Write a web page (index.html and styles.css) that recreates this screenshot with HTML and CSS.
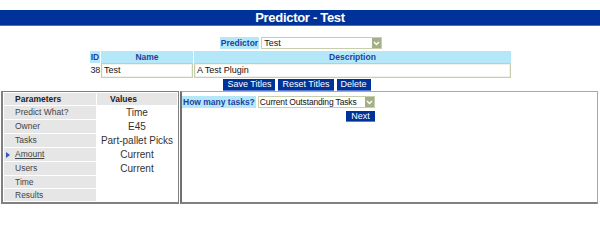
FILE: index.html
```html
<!DOCTYPE html>
<html>
<head>
<meta charset="utf-8">
<link rel="stylesheet" href="styles.css">
</head>
<body>
<div class="title">Predictor - Test</div>

<div class="pred-row">
  <span class="lbl">Predictor</span>
  <div class="select sel-pred"><span class="sel-val">Test</span><span class="sel-arrow"><svg width="7" height="5" viewBox="0 0 7 5"><path d="M1 1 L3.5 3.5 L6 1" fill="none" stroke="#fff" stroke-width="1.4"/></svg></span></div>
</div>

<div class="plugins">
  <div class="th">ID</div>
  <div class="th">Name</div>
  <div class="th">Description</div>
  <div class="td-id">38</div>
  <div class="box">Test</div>
  <div class="box">A Test Plugin</div>
</div>

<div class="buttons">
  <span class="btn">Save Titles</span>
  <span class="btn">Reset Titles</span>
  <span class="btn">Delete</span>
</div>

<div class="lower">
  <div class="params">
    <table class="ptable">
      <tr><th class="ph"><span class="mark"></span>Parameters</th><th class="ph vh">Values</th></tr>
      <tr class="r"><td class="p"><span class="mark"></span>Predict What?</td><td class="v">Time</td></tr>
      <tr class="r"><td class="p"><span class="mark"></span>Owner</td><td class="v">E45</td></tr>
      <tr class="r"><td class="p"><span class="mark"></span>Tasks</td><td class="v">Part-pallet Picks</td></tr>
      <tr class="r"><td class="p"><span class="mark"><span class="tri"></span></span><span class="cur">Amount</span></td><td class="v">Current</td></tr>
      <tr class="r"><td class="p"><span class="mark"></span>Users</td><td class="v">Current</td></tr>
      <tr class="s"><td class="p"><span class="mark"></span>Time</td><td class="v"></td></tr>
      <tr class="s"><td class="p"><span class="mark"></span>Results</td><td class="v"></td></tr>
    </table>
  </div>
  <div class="work">
    <div class="form">
      <span class="lbl lbl-q">How many tasks?</span>
      <div class="select sel-tasks"><span class="sel-val">Current Outstanding Tasks</span><span class="sel-arrow"><svg width="7" height="5" viewBox="0 0 7 5"><path d="M1 1 L3.5 3.5 L6 1" fill="none" stroke="#fff" stroke-width="1.4"/></svg></span></div>
      <span></span>
      <span class="btn btn-next">Next</span>
    </div>
  </div>
</div>
</body>
</html>
```

FILE: styles.css
```css
html, body {
  margin: 0;
  padding: 0;
  background: #fff;
}
body {
  padding-top: 10px;
  font-family: "Liberation Sans", Arial, sans-serif;
  font-size: 9px;
  color: #222;
}
.title {
  height: 16px;
  line-height: 16px;
  background: #003399;
  border-bottom: 1px solid #4a6fc0;
  color: #fff;
  font-weight: bold;
  font-size: 13px;
  letter-spacing: -0.3px;
  text-align: center;
  box-sizing: border-box;
}
.pred-row {
  margin-top: 11px;
  display: flex;
  justify-content: center;
  align-items: flex-start;
  gap: 2px;
  height: 13px;
  margin-bottom: 1px;
  padding-left: 2px;
}
.lbl {
  background: #b4e8f8;
  color: #1f3f9f;
  font-weight: bold;
  font-size: 8.5px;
  height: 12px;
  line-height: 12px;
  padding: 0 1px;
  white-space: nowrap;
}
.select {
  display: flex;
  align-items: center;
  box-sizing: border-box;
  height: 12px;
  border: 1px solid #c6ceae;
  background: #fff;
}
.sel-pred { width: 121px; }
.sel-tasks { width: 117px; }
.sel-val {
  flex: 1;
  padding-left: 2px;
  font-size: 9px;
  line-height: 10px;
  color: #111;
  white-space: nowrap;
  overflow: hidden;
}
.sel-tasks .sel-val {
  font-size: 8.5px;
  letter-spacing: -0.15px;
  padding-left: 1px;
}
.sel-arrow {
  width: 9px;
  height: 10px;
  flex: none;
  background: #a4af88;
  display: flex;
  align-items: center;
  justify-content: center;
}
.sel-arrow svg { display: block; }

.plugins {
  display: grid;
  grid-template-columns: 10px 92px 317px;
  grid-template-rows: 12px 15px;
  column-gap: 1px;
  width: 421px;
  margin: 0 auto;
  padding-left: 1px;
}
.th {
  background: #b4e8f8;
  color: #1f3f9f;
  font-weight: bold;
  font-size: 8.5px;
  line-height: 12px;
  text-align: center;
  overflow: hidden;
}
.td-id {
  text-align: right;
  font-size: 9px;
  line-height: 15px;
  color: #222;
  letter-spacing: -0.3px;
}
.box {
  box-sizing: border-box;
  border: 1px solid #c6ceae;
  box-shadow: inset 0 0 0 1px #f1f3ea;
  padding-left: 2px;
  font-size: 9px;
  line-height: 13px;
  color: #111;
}

.buttons {
  margin-top: 1px;
  display: flex;
  justify-content: center;
  gap: 3px;
  padding-right: 6px;
  height: 12px;
}
.btn {
  background: #003399;
  color: #fff;
  font-size: 9px;
  line-height: 11px;
  height: 12px;
  box-sizing: border-box;
  padding: 0 4px;
  border-bottom: 1px solid #5a7ccc;
  white-space: nowrap;
}

.lower {
  display: grid;
  grid-template-columns: 178px 1fr;
  column-gap: 1px;
  margin: 0 2px 0 1px;
}
.params {
  box-sizing: border-box;
  border: 1px solid #808080;
  border-left-width: 2px;
  border-bottom-width: 2px;
  height: 113px;
}
.ptable {
  width: 100%;
  border-collapse: separate;
  border-spacing: 1px;
  table-layout: fixed;
}
.ptable td, .ptable th {
  padding: 0;
}
.ph {
  background: #e6e6e6;
  font-weight: bold;
  font-size: 8.5px;
  color: #222;
  text-align: left;
  height: 12px;
  line-height: 12px;
  width: 92px;
}
.ph.vh {
  width: auto;
  padding-left: 13px;
}
.p {
  background: #e6e6e6;
  font-size: 8.5px;
  color: #444;
  white-space: nowrap;
}
.v {
  background: #fff;
  text-align: center;
  font-size: 10px;
  color: #333;
  white-space: nowrap;
}
.r td { height: 13px; line-height: 13px; }
.s td { height: 12px; line-height: 12px; }
.mark {
  display: inline-block;
  width: 11px;
  vertical-align: middle;
}
.tri {
  display: block;
  width: 0;
  height: 0;
  margin-left: 2px;
  border-top: 3px solid transparent;
  border-bottom: 3px solid transparent;
  border-left: 4px solid #3355c4;
}
.cur { text-decoration: underline; }

.work {
  box-sizing: border-box;
  border: 1px solid #a8a8a8;
  border-left: 2px solid #707070;
  border-bottom: 2px solid #808080;
  height: 113px;
  padding-top: 4px;
}
.form {
  display: inline-grid;
  grid-template-columns: auto auto;
  column-gap: 2px;
  row-gap: 3px;
  align-items: start;
}
.lbl-q { padding: 0 1px 0 1px; }
.btn-next {
  justify-self: end;
  height: 11px;
  line-height: 10px;
  padding: 0 5px;
}
```
